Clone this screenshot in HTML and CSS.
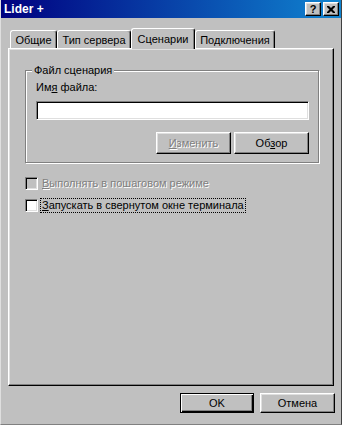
FILE: index.html
```html
<!DOCTYPE html>
<html lang="ru">
<head>
    <meta charset="UTF-8">
    <meta name="viewport" content="width=device-width, initial-scale=1.0">
    <title>Lider +</title>
    <link rel="stylesheet" href="styles.css">
</head>
<body>
    <div class="window">
        <div class="titlebar">
            <span class="title">Lider +</span>
            <div class="title-buttons">
                <button class="title-btn help">?</button>
                <button class="title-btn close">
                    <svg width="8" height="7" viewBox="0 0 8 7">
                        <path d="M0 0h2l2 2 2-2h2v1l-2.5 2.5L8 6v1H6L4 5 2 7H0V6l2.5-2.5L0 1z" fill="#000"/>
                    </svg>
                </button>
            </div>
        </div>

        <div class="dialog-body">
            <div class="tabs">
                <div class="tab tab-1">Общие</div>
                <div class="tab tab-2">Тип сервера</div>
                <div class="tab tab-3 active">Сценарии</div>
                <div class="tab tab-4">Подключения</div>
            </div>

            <div class="panel">
                <div class="group">
                    <span class="group-title">Файл сценария</span>
                    <div class="field-label">Им<u>я</u> файла:</div>
                    <div class="text-input"></div>
                    <div class="group-buttons">
                        <button class="btn" disabled><span class="disabled-text"><u>И</u>зменить</span></button>
                        <button class="btn">Об<u>з</u>ор</button>
                    </div>
                </div>

                <div class="checks">
                    <label class="check-row">
                        <span class="checkbox disabled"></span>
                        <span class="check-text disabled-text"><u>В</u>ыполнять в пошаговом режиме</span>
                    </label>
                    <label class="check-row">
                        <span class="checkbox"></span>
                        <span class="check-text focused"><u>З</u>апускать в свернутом окне терминала</span>
                    </label>
                </div>
            </div>

            <div class="footer">
                <button class="btn btn-default">OK</button>
                <button class="btn">Отмена</button>
            </div>
        </div>
    </div>
</body>
</html>
```

FILE: styles.css
```css
* {
    box-sizing: border-box;
}

body {
    margin: 0;
    background: #c0c0c0;
    font-family: "Liberation Sans", Arial, sans-serif;
    font-size: 11px;
    color: #000;
}

.window {
    width: 342px;
    height: 425px;
    background: #c0c0c0;
    border-left: 1px solid #dfdfdf;
    border-right: 1px solid #404040;
    border-bottom: 1px solid #808080;
    display: flex;
    flex-direction: column;
}

/* title bar */
.titlebar {
    height: 18px;
    flex: none;
    background: linear-gradient(to right, #000080, #1084d0);
    display: flex;
    align-items: center;
    justify-content: space-between;
    padding: 0 2px 0 2px;
}

.title {
    color: #fff;
    font-weight: bold;
    font-size: 12px;
    padding-left: 1px;
}

.title-buttons {
    display: flex;
    gap: 2px;
}

.title-btn {
    width: 16px;
    height: 14px;
    padding: 0;
    background: #c0c0c0;
    border: 1px solid;
    border-color: #fff #000 #000 #fff;
    box-shadow: inset -1px -1px 0 #808080, inset 1px 1px 0 #dfdfdf;
    display: flex;
    align-items: center;
    justify-content: center;
    font-family: "Liberation Sans", Arial, sans-serif;
    font-weight: bold;
    font-size: 11px;
    line-height: 1;
}

/* tabs */
.dialog-body {
    flex: 1;
    display: flex;
    flex-direction: column;
}

.tabs {
    display: flex;
    align-items: flex-end;
    height: 20px;
    margin: 10px 0 0 9px;
}

.tab {
    height: 18px;
    border: 1px solid #fff;
    border-bottom: none;
    border-right-color: #000;
    border-radius: 3px 3px 0 0;
    box-shadow: inset -1px 0 0 #808080;
    display: flex;
    align-items: center;
    justify-content: center;
    padding-top: 1px;
}

.tab-1 { width: 47px; }
.tab-2 { width: 74px; }
.tab-3 { width: 64px; }
.tab-4 { width: 80px; }

.tab.active {
    height: 21px;
    margin-bottom: -1px;
    position: relative;
    z-index: 1;
    background: #c0c0c0;
    padding-bottom: 2px;
}

.panel {
    margin-left: 7px;
    width: 326px;
    height: 338px;
    border: 1px solid;
    border-color: #fff #000 #000 #fff;
    box-shadow: inset -1px -1px 0 #808080, inset 1px 1px 0 #dfdfdf;
    padding: 21px 0 0 16px;
}

/* group box */
.group {
    position: relative;
    width: 294px;
    height: 93px;
    border: 1px solid #808080;
    box-shadow: 1px 1px 0 #fff, inset 1px 1px 0 #fff;
    padding: 10px 9px 0 10px;
}

.group-title {
    position: absolute;
    top: -7px;
    left: 6px;
    padding: 0 2px;
    background: #c0c0c0;
    line-height: 13px;
}

.field-label {
    line-height: 13px;
}

.text-input {
    margin-top: 7px;
    height: 19px;
    background: #fff;
    border: 1px solid;
    border-color: #808080 #fff #fff #808080;
    box-shadow: inset 1px 1px 0 #000, inset -1px -1px 0 #dfdfdf;
}

.group-buttons {
    display: flex;
    justify-content: flex-end;
    gap: 3px;
    margin-top: 12px;
}

/* buttons */
.btn {
    width: 75px;
    height: 22px;
    padding: 0;
    background: #c0c0c0;
    border: 1px solid;
    border-color: #fff #000 #000 #fff;
    box-shadow: inset -1px -1px 0 #808080, inset 1px 1px 0 #dfdfdf;
    font-family: "Liberation Sans", Arial, sans-serif;
    font-size: 11px;
    color: #000;
}

.btn-default {
    border-color: #000;
    box-shadow: inset 1px 1px 0 #fff, inset -1px -1px 0 #000, inset -2px -2px 0 #808080;
}

.disabled-text {
    color: #808080;
    text-shadow: 1px 1px 0 #fff;
}

/* checkboxes */
.checks {
    display: flex;
    flex-direction: column;
    gap: 9px;
    margin-top: 14px;
}

.check-row {
    display: flex;
    align-items: center;
    gap: 3px;
    height: 13px;
}

.checkbox {
    width: 13px;
    height: 13px;
    background: #fff;
    border: 1px solid;
    border-color: #808080 #fff #fff #808080;
    box-shadow: inset 1px 1px 0 #000, inset -1px -1px 0 #dfdfdf;
}

.checkbox.disabled {
    background: #c0c0c0;
}

.check-text {
    line-height: 13px;
    padding: 0 1px;
}

.check-text.focused {
    outline: 1px dotted #000;
}

/* footer */
.footer {
    display: flex;
    justify-content: flex-end;
    gap: 6px;
    margin: 7px 6px 0 0;
}

.footer .btn {
    height: 20px;
}

.footer .btn-default {
    width: 74px;
}
```
